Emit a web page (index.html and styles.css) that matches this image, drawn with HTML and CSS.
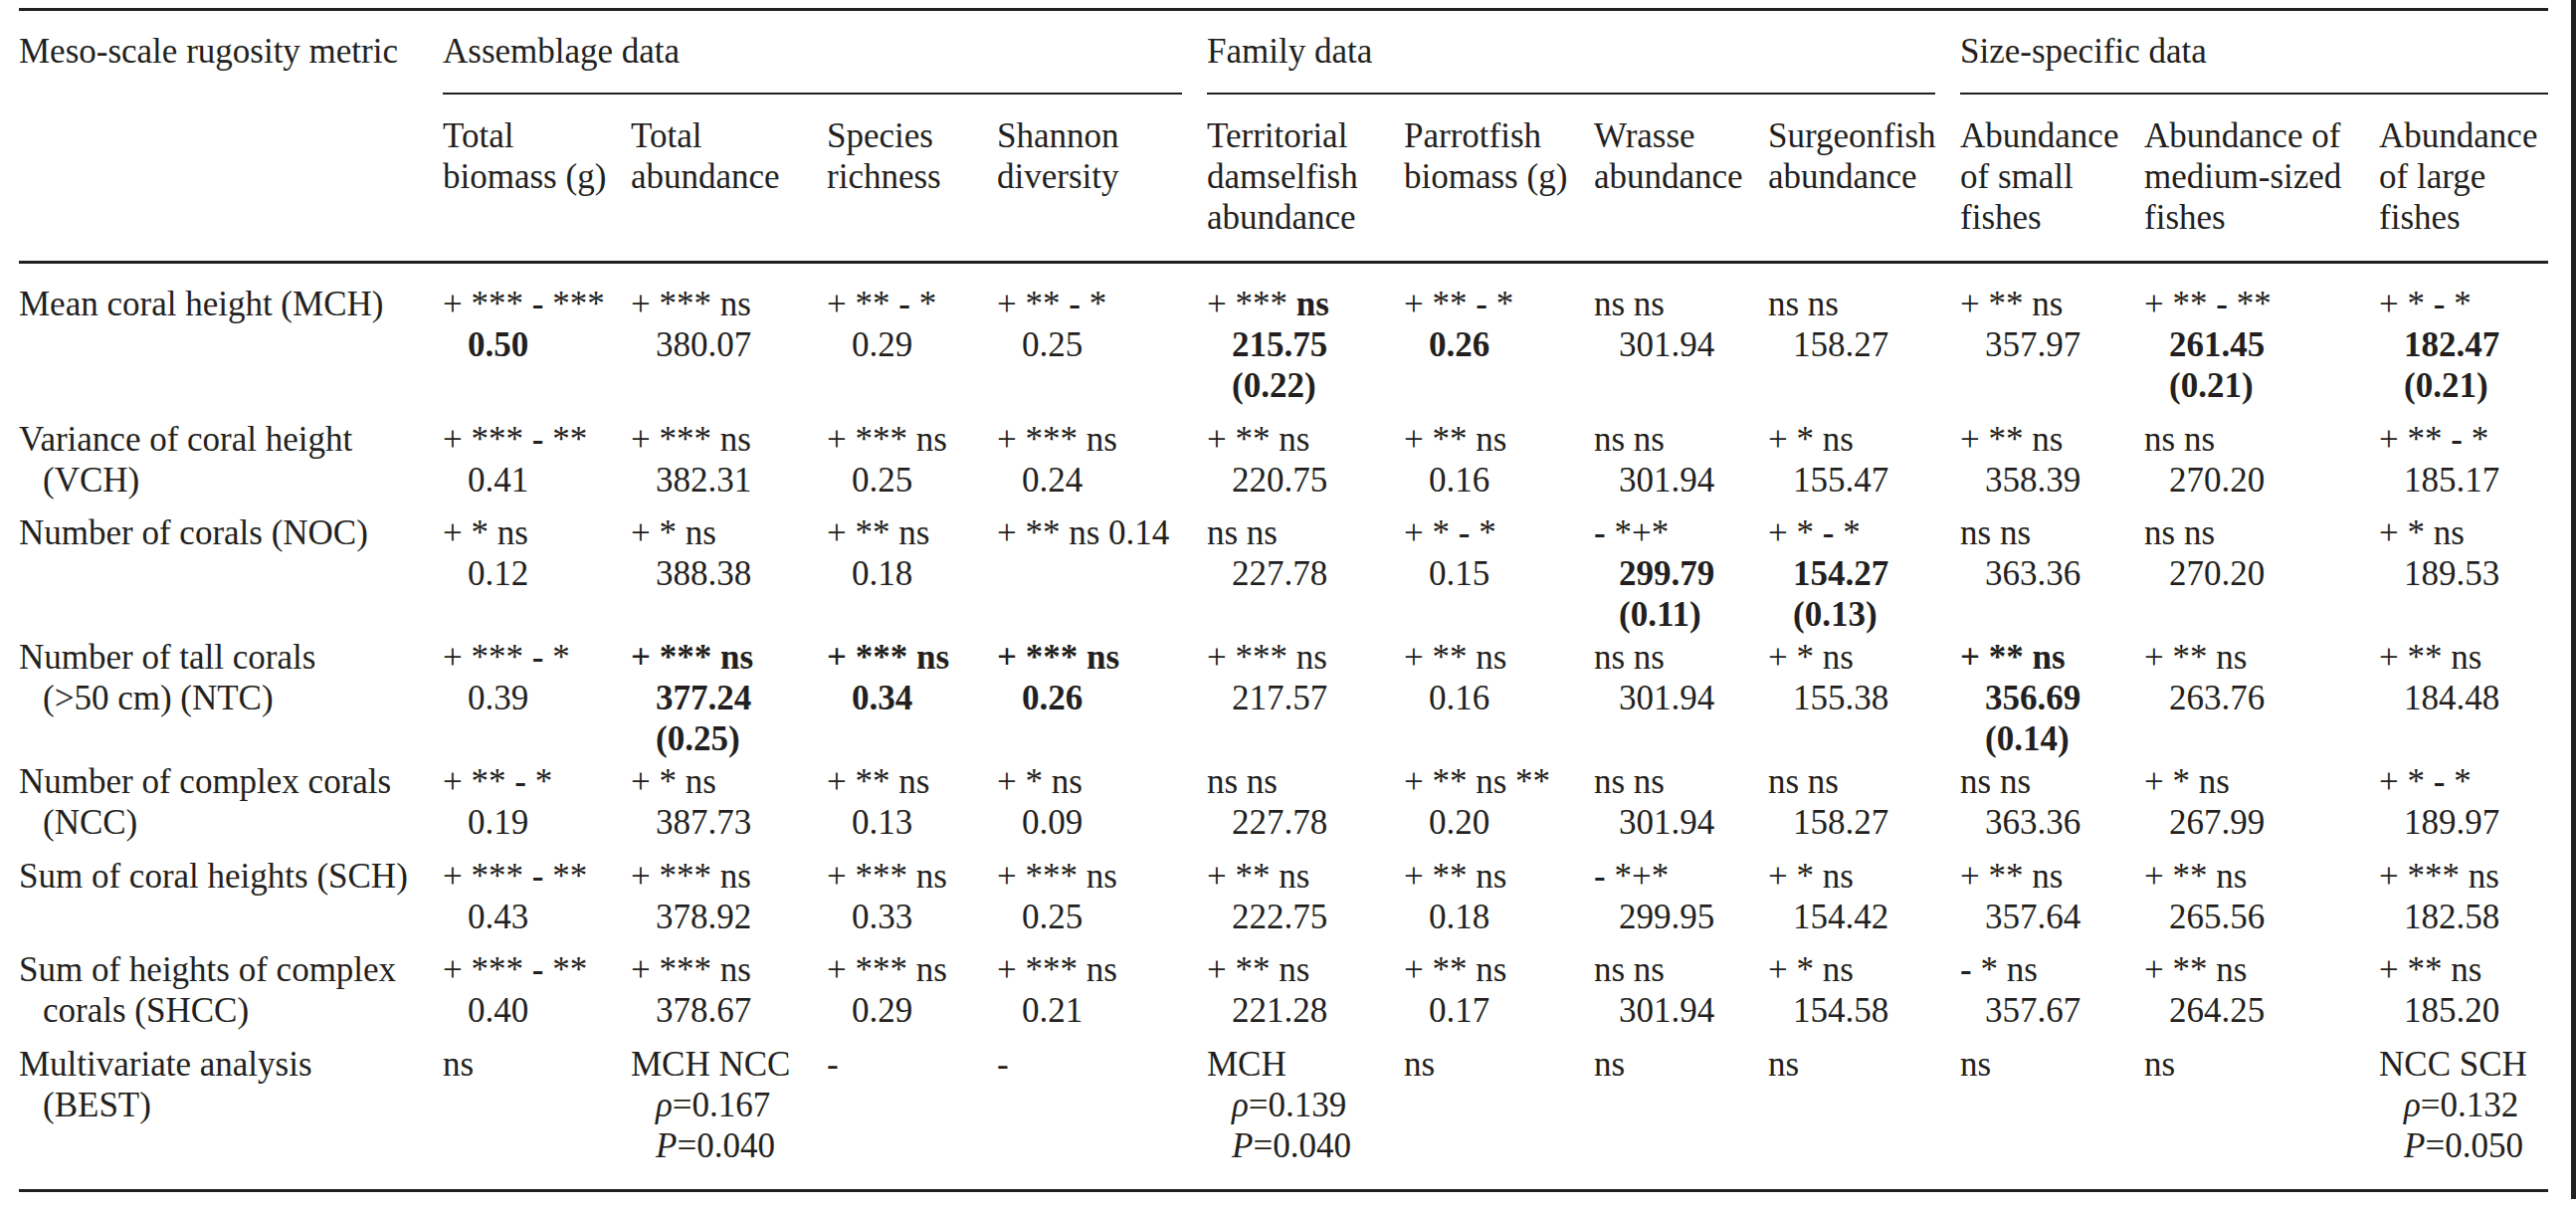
FILE: index.html
```html
<!DOCTYPE html>
<html lang="en">
<head>
<meta charset="utf-8">
<title>Meso-scale rugosity metrics</title>
<link rel="stylesheet" href="styles.css">
</head>
<body>
<div class="frame">
<table class="tbl">
<colgroup>
<col style="width:426px"><col style="width:189px"><col style="width:197px"><col style="width:171px"><col style="width:211px"><col style="width:198px"><col style="width:191px"><col style="width:175px"><col style="width:193px"><col style="width:185px"><col style="width:236px"><col style="width:170px">
</colgroup>
<thead>
<tr>
<th class="corner" rowspan="2">Meso-scale rugosity metric</th>
<th class="grp" colspan="4"><div>Assemblage data</div></th>
<th class="grp" colspan="4"><div>Family data</div></th>
<th class="grp last" colspan="3"><div>Size-specific data</div></th>
</tr>
<tr>
<th class="col">Total<br>biomass (g)</th>
<th class="col">Total<br>abundance</th>
<th class="col">Species<br>richness</th>
<th class="col">Shannon<br>diversity</th>
<th class="col">Territorial<br>damselfish<br>abundance</th>
<th class="col">Parrotfish<br>biomass (g)</th>
<th class="col">Wrasse<br>abundance</th>
<th class="col">Surgeonfish<br>abundance</th>
<th class="col">Abundance<br>of small<br>fishes</th>
<th class="col">Abundance of<br>medium-sized<br>fishes</th>
<th class="col">Abundance<br>of large<br>fishes</th>
</tr>
</thead>
<tbody>
<tr class="first">
<td class="lab">Mean coral height (MCH)</td>
<td>+ *** <b>-</b> ***<br><b>0.50</b></td>
<td>+ *** ns<br>380.07</td>
<td>+ ** <b>-</b> *<br>0.29</td>
<td>+ ** <b>-</b> *<br>0.25</td>
<td>+ *** <b>ns</b><br><b>215.75</b><br><b>(0.22)</b></td>
<td>+ ** <b>-</b> *<br><b>0.26</b></td>
<td>ns ns<br>301.94</td>
<td>ns ns<br>158.27</td>
<td>+ ** ns<br>357.97</td>
<td>+ ** <b>-</b> **<br><b>261.45</b><br><b>(0.21)</b></td>
<td>+ * <b>-</b> *<br><b>182.47</b><br><b>(0.21)</b></td>
</tr>
<tr>
<td class="lab">Variance of coral height<br>(VCH)</td>
<td>+ *** <b>-</b> **<br>0.41</td>
<td>+ *** ns<br>382.31</td>
<td>+ *** ns<br>0.25</td>
<td>+ *** ns<br>0.24</td>
<td>+ ** ns<br>220.75</td>
<td>+ ** ns<br>0.16</td>
<td>ns ns<br>301.94</td>
<td>+ * ns<br>155.47</td>
<td>+ ** ns<br>358.39</td>
<td>ns ns<br>270.20</td>
<td>+ ** <b>-</b> *<br>185.17</td>
</tr>
<tr>
<td class="lab">Number of corals (NOC)</td>
<td>+ * ns<br>0.12</td>
<td>+ * ns<br>388.38</td>
<td>+ ** ns<br>0.18</td>
<td>+ ** ns 0.14</td>
<td>ns ns<br>227.78</td>
<td>+ * <b>-</b> *<br>0.15</td>
<td><b>-</b> *+*<br><b>299.79</b><br><b>(0.11)</b></td>
<td>+ * <b>-</b> *<br><b>154.27</b><br><b>(0.13)</b></td>
<td>ns ns<br>363.36</td>
<td>ns ns<br>270.20</td>
<td>+ * ns<br>189.53</td>
</tr>
<tr class="tight">
<td class="lab">Number of tall corals<br>(&gt;50 cm) (NTC)</td>
<td>+ *** <b>-</b> *<br>0.39</td>
<td><b>+ *** ns</b><br><b>377.24</b><br><b>(0.25)</b></td>
<td><b>+ *** ns</b><br><b>0.34</b></td>
<td><b>+ *** ns</b><br><b>0.26</b></td>
<td>+ *** ns<br>217.57</td>
<td>+ ** ns<br>0.16</td>
<td>ns ns<br>301.94</td>
<td>+ * ns<br>155.38</td>
<td><b>+ ** ns</b><br><b>356.69</b><br><b>(0.14)</b></td>
<td>+ ** ns<br>263.76</td>
<td>+ ** ns<br>184.48</td>
</tr>
<tr class="tight">
<td class="lab">Number of complex corals<br>(NCC)</td>
<td>+ ** <b>-</b> *<br>0.19</td>
<td>+ * ns<br>387.73</td>
<td>+ ** ns<br>0.13</td>
<td>+ * ns<br>0.09</td>
<td>ns ns<br>227.78</td>
<td>+ ** ns **<br>0.20</td>
<td>ns ns<br>301.94</td>
<td>ns ns<br>158.27</td>
<td>ns ns<br>363.36</td>
<td>+ * ns<br>267.99</td>
<td>+ * <b>-</b> *<br>189.97</td>
</tr>
<tr>
<td class="lab">Sum of coral heights (SCH)</td>
<td>+ *** <b>-</b> **<br>0.43</td>
<td>+ *** ns<br>378.92</td>
<td>+ *** ns<br>0.33</td>
<td>+ *** ns<br>0.25</td>
<td>+ ** ns<br>222.75</td>
<td>+ ** ns<br>0.18</td>
<td><b>-</b> *+*<br>299.95</td>
<td>+ * ns<br>154.42</td>
<td>+ ** ns<br>357.64</td>
<td>+ ** ns<br>265.56</td>
<td>+ *** ns<br>182.58</td>
</tr>
<tr>
<td class="lab">Sum of heights of complex<br>corals (SHCC)</td>
<td>+ *** <b>-</b> **<br>0.40</td>
<td>+ *** ns<br>378.67</td>
<td>+ *** ns<br>0.29</td>
<td>+ *** ns<br>0.21</td>
<td>+ ** ns<br>221.28</td>
<td>+ ** ns<br>0.17</td>
<td>ns ns<br>301.94</td>
<td>+ * ns<br>154.58</td>
<td><b>-</b> * ns<br>357.67</td>
<td>+ ** ns<br>264.25</td>
<td>+ ** ns<br>185.20</td>
</tr>
<tr class="last">
<td class="lab">Multivariate analysis<br>(BEST)</td>
<td>ns</td>
<td>MCH NCC<br><i>ρ</i>=0.167<br><i>P</i>=0.040</td>
<td>-</td>
<td>-</td>
<td>MCH<br><i>ρ</i>=0.139<br><i>P</i>=0.040</td>
<td>ns</td>
<td>ns</td>
<td>ns</td>
<td>ns</td>
<td>ns</td>
<td>NCC SCH<br><i>ρ</i>=0.132<br><i>P</i>=0.050</td>
</tr>
</tbody>
</table>
</div>
</body>
</html>
```
FILE: styles.css
```css
html, body {
  margin: 0;
  padding: 0;
  background: #ffffff;
}

body {
  font-family: "Liberation Serif", "Times New Roman", serif;
  color: #231f20;
}

.frame {
  width: 2589px;
  height: 1205px;
  box-sizing: border-box;
  border-right: 5px solid #231f20;
  padding: 8px 0 0 19px;
}

.tbl {
  border-collapse: separate;
  border-spacing: 0;
  table-layout: fixed;
  width: 2542px;
  border-top: 3px solid #231f20;
  border-bottom: 3px solid #231f20;
  font-size: 35px;
  line-height: 41px;
}

.tbl th {
  font-weight: normal;
  text-align: left;
  vertical-align: top;
  padding: 0;
  white-space: nowrap;
}

.tbl th.corner {
  padding-top: 20px;
  border-bottom: 3px solid #231f20;
}

.tbl th.grp {
  padding-top: 20px;
}

.tbl th.grp > div {
  padding-bottom: 21px;
  border-bottom: 2px solid #231f20;
  margin-right: 25px;
}

.tbl th.grp.last > div {
  margin-right: 0;
}

.tbl th.col {
  padding-top: 21px;
  padding-bottom: 23px;
  border-bottom: 3px solid #231f20;
}

.tbl td {
  vertical-align: top;
  white-space: nowrap;
  padding: 12.5px 0 0 25px;
  text-indent: -25px;
}

.tbl td.lab {
  padding-left: 24px;
  text-indent: -24px;
}

.tbl tr.first td {
  padding-top: 20px;
}

.tbl tr.tight td {
  padding-top: 2px;
}

.tbl tr.last td {
  padding-bottom: 23.5px;
}

.tbl b {
  font-weight: bold;
}

.tbl i {
  font-style: italic;
}
```
